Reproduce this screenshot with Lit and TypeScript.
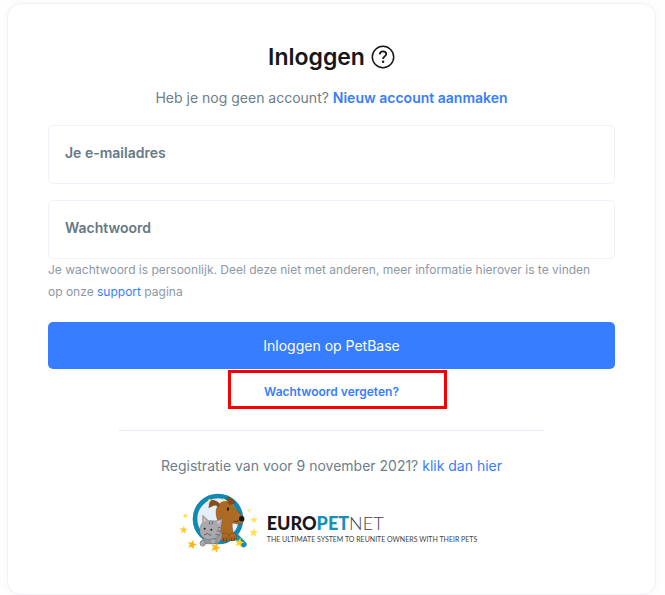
import { LitElement, html, css, svg } from "lit";
import { customElement } from "lit/decorators.js";

interface Star {
  x: number;
  y: number;
  r: number;
  turn: number;
  color: string;
}

const stars: Star[] = [
  { x: 46, y: 92, r: 9, turn: 10, color: "#ffe04d" },
  { x: 41, y: 135, r: 13, turn: 5, color: "#fdca2c" },
  { x: 66, y: 179, r: 15, turn: 15, color: "#fcb614" },
  { x: 137, y: 188, r: 16, turn: 20, color: "#fdb913" },
  { x: 208, y: 173, r: 15, turn: 12, color: "#ffd21f" },
  { x: 251, y: 143, r: 14, turn: 5, color: "#ffe04d" },
  { x: 252, y: 105, r: 12, turn: -5, color: "#ffe566" },
  { x: 238, y: 76, r: 8, turn: 10, color: "#ffee99" },
  { x: 118, y: 46, r: 6, turn: 0, color: "#ffe680" },
  { x: 160, y: 45, r: 6, turn: 0, color: "#ffe680" },
];

const starPoints = (r: number): string =>
  Array.from({ length: 10 }, (_, i) => {
    const radius = i % 2 ? r * 0.42 : r;
    const angle = (Math.PI * i) / 5 - Math.PI / 2;
    return `${(radius * Math.cos(angle)).toFixed(1)},${(radius * Math.sin(angle)).toFixed(1)}`;
  }).join(" ");

@customElement("europetnet-logo")
export class EuropetnetLogo extends LitElement {
  static styles = css`
    :host {
      display: flex;
      align-items: flex-start;
    }
    .emblem {
      width: 90px;
      height: 75px;
      flex: none;
    }
    .words {
      padding: 27px 16px 0 7px;
      white-space: nowrap;
    }
    .name {
      font: 900 18px/22px Lato, sans-serif;
      color: #17171b;
    }
    .pet {
      color: #1590b8;
    }
    .net {
      font-weight: 300;
      color: #444;
    }
    .tagline {
      font: 400 7px/10px Lato, sans-serif;
      color: #444;
    }
  `;

  render() {
    return html`
      <svg class="emblem" viewBox="0 0 270 225" aria-hidden="true">
        <path d="M194 150 221 178" stroke="#1590b8" stroke-width="18" stroke-linecap="round" />
        <circle cx="144" cy="102" r="69" fill="#e6eef8" stroke="#1289b0" stroke-width="14" />
        <g stroke="#55300f" stroke-width="1" stroke-linejoin="round">
          <path
            fill="#ad6a24"
            d="M143 64C150 52 162 46 173 50C184 52 190 61 196 70C204 81 218 92 221 101C224 112 214 119 204 117C196 116 190 114 187 115C185 128 191 139 190 151L157 161C151 137 148 125 143 105C137 91 136 74 143 64Z"
          />
          <path fill="#8b4d17" d="M148 55C139 47 126 42 121 48C116 55 119 62 116 68C125 66 130 59 138 61L146 66Z" />
          <path fill="#8b4d17" d="M174 50C169 43 169 38 176 36C184 40 192 46 195 54C187 55 180 60 177 58Z" />
          <ellipse cx="165" cy="157" rx="14" ry="13" fill="#ad6a24" />
          <ellipse cx="188" cy="156" rx="12" ry="12" fill="#ad6a24" />
        </g>
        <ellipse cx="215" cy="101" rx="8" ry="8" fill="#17130f" />
        <ellipse cx="174" cy="72" rx="3" ry="5" fill="#17130f" />
        <path d="M191 109Q202 112 207 105M161 158v10M169 158v10M185 158v9M193 158v8" fill="none" stroke="#3e210b" stroke-width="2" />
        <g stroke="#4d4d50" stroke-width="1" stroke-linejoin="round">
          <path
            fill="#97989b"
            d="M134 121C151 125 158 139 156 155C155 170 143 178 128 176L101 177C91 186 86 176 96 166Z"
          />
          <path
            fill="#aaaaad"
            d="M98 91 116 107Q124 105 133 108L158 101 153 132C151 152 137 164 119 164C102 164 89 152 89 137C88 128 92 119 98 113Z"
          />
          <ellipse cx="98" cy="175" rx="8" ry="9" fill="#aaaaad" />
          <ellipse cx="129" cy="169" rx="10" ry="8" fill="#aaaaad" />
        </g>
        <path fill="#f2b2bb" d="M101 98 110 108 101 111ZM151 106 149 119 139 110Z" />
        <path d="M143 129 152 127M140 138 151 138M136 148 148 150M119 109v10M127 109v9" stroke="#68696d" stroke-width="3" />
        <circle cx="104" cy="131" r="3" fill="#222" />
        <circle cx="124" cy="134" r="3" fill="#222" />
        <path fill="#eb8190" d="M107 139h9l-5 5Z" />
        <path d="M102 149Q109 151 112 144Q116 152 124 150" fill="none" stroke="#444" stroke-width="2" />
        ${stars.map(
          (s) => svg`<polygon points=${starPoints(s.r)} fill=${s.color}
            transform="translate(${s.x} ${s.y}) rotate(${s.turn})" />`
        )}
      </svg>
      <div class="words">
        <div class="name">EURO<span class="pet">PET</span><span class="net">NET</span></div>
        <div class="tagline">THE ULTIMATE SYSTEM TO REUNITE OWNERS WITH THEIR PETS</div>
      </div>
    `;
  }
}

@customElement("app-root")
export class AppRoot extends LitElement {
  static styles = css`
    :host {
      display: block;
      background: #fefefe;
      padding: 3px 9px 1px 7px;
      font: 400 14px/24px Inter, sans-serif;
      color: #6c7e89;
    }
    * {
      box-sizing: border-box;
    }
    .card {
      background: #fff;
      border: 1px solid #f1f1fa;
      border-radius: 14px;
      padding: 37px 40px 34px;
      box-shadow: 0 0 8px rgba(60, 60, 120, 0.03);
    }
    h1 {
      display: flex;
      justify-content: center;
      align-items: center;
      gap: 6px;
      margin: 0;
      font-size: 23px;
      line-height: 32px;
      font-weight: 600;
      color: #17171b;
    }
    .help {
      display: flex;
      padding: 0;
      border: 0;
      background: none;
      color: inherit;
    }
    .help svg {
      width: 24px;
      height: 24px;
    }
    a {
      color: #377dff;
      text-decoration: none;
    }
    p {
      margin: 0;
    }
    .center {
      text-align: center;
    }
    .signup {
      margin: 13px 0 15px;
    }
    .signup a {
      font-weight: 600;
    }
    .field {
      display: block;
      width: 100%;
      height: 59px;
      border: 1px solid #f1f1fa;
      border-radius: 5px;
      padding: 0 16px 4px;
      background: #fff;
      font: 600 14px/24px Inter, sans-serif;
      color: #1e2022;
    }
    .field::placeholder {
      color: #667985;
      opacity: 1;
    }
    .field + .field {
      margin-top: 16px;
    }
    .hint {
      padding-right: 16px;
      font-size: 12px;
      line-height: 22px;
      color: #8c98a4;
    }
    .submit {
      display: block;
      width: 100%;
      height: 47px;
      margin-top: 19px;
      border: 0;
      border-radius: 5px;
      background: #377dff;
      font: 400 14px/24px Inter, sans-serif;
      color: #fff;
    }
    .forgot {
      position: relative;
      width: fit-content;
      margin: 11px auto 0;
      font-size: 12px;
      font-weight: 600;
    }
    .marker {
      position: absolute;
      inset: -10px -48px -5px -36px;
      border: 3px solid #f80000;
      pointer-events: none;
    }
    hr {
      width: 75%;
      margin: 26px auto 23px;
      border: 0;
      border-top: 1px solid #e7eaf3;
    }
    europetnet-logo {
      justify-content: center;
      margin-top: 7px;
    }
  `;

  private handleSubmit(event: Event) {
    event.preventDefault();
  }

  render() {
    return html`
      <main class="card">
        <h1>
          Inloggen
          <button class="help" type="button" aria-label="Help">
            <svg viewBox="0 0 24 24" fill="none" stroke="currentColor" aria-hidden="true">
              <circle cx="12" cy="12" r="10.7" stroke-width="1.5" />
              <path d="M8.8 9.4C8.9 7.3 10.1 6.4 12 6.4C13.9 6.4 15.2 7.5 15.2 9.1C15.2 11.4 12.1 11.4 12.1 14" stroke-width="1.8" />
              <circle cx="12.1" cy="16.8" r="1.2" fill="currentColor" stroke="none" />
            </svg>
          </button>
        </h1>
        <p class="center signup">Heb je nog geen account? <a href="#nieuw">Nieuw account aanmaken</a></p>
        <form @submit=${this.handleSubmit}>
          <input class="field" type="email" placeholder="Je e-mailadres" aria-label="Je e-mailadres" />
          <input class="field" type="password" placeholder="Wachtwoord" aria-label="Wachtwoord" aria-describedby="hint" />
          <p class="hint" id="hint">
            Je wachtwoord is persoonlijk. Deel deze niet met anderen, meer informatie hierover is te vinden op onze
            <a href="#support">support</a> pagina
          </p>
          <button class="submit" type="submit">Inloggen op PetBase</button>
        </form>
        <p class="forgot"><a href="#vergeten">Wachtwoord vergeten?</a><span class="marker"></span></p>
        <hr />
        <p class="center">Registratie van voor 9 november 2021? <a href="#registratie">klik dan hier</a></p>
        <europetnet-logo></europetnet-logo>
      </main>
    `;
  }
}
